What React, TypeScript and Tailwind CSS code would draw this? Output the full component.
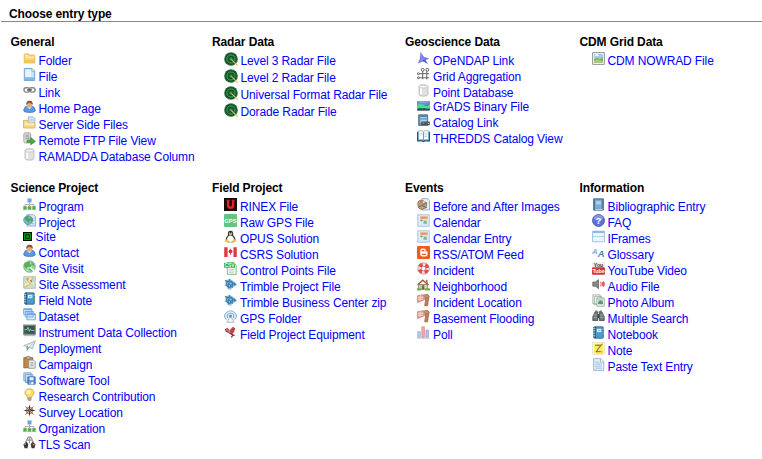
import React from "react";

type Item = { label: string; icon: React.ReactNode; kind?: "radar" | "site" | "short" };
type Section = { title: string; items: Item[] };

const I = {
  folder: (
    <>
      <path d="M1.5 13.5V3.2q0-1 1-1h4l1.3 1.6h5.7q1 0 1 1v8.7z" fill="#f7d57c" stroke="#dfb35c" />
      <path d="M3 6.5h10.5M3 4.5h3" stroke="#fff3bf" strokeWidth="1.4" />
      <path d="M2 10h12v3H2z" fill="#f2c45a" />
    </>
  ),
  file: (
    <>
      <path d="M1.6.6h9.6l3.2 3.2v11.6H1.6z" fill="#c9e2fa" stroke="#5f95ce" />
      <path d="M3 2h7v9H3z" fill="#e5f2ff" />
      <path d="M2.2 11.5h11.6V15H2.2z" fill="#84b5ea" />
      <path d="M11 .8v3.4h3.2" fill="#fff" stroke="#79a9dc" />
    </>
  ),
  link: (
    <g fill="none" stroke="#888" strokeWidth="1.8">
      <rect x="1.2" y="4.5" width="7" height="5.5" rx="2.5" />
      <rect x="7.8" y="4.5" width="7" height="5.5" rx="2.5" />
      <path d="M5 7.3h6" stroke="#555" />
    </g>
  ),
  person: (
    <>
      <path d="M1 13.5q0-5.5 4.5-5.5h5q4.5 0 4.5 5.5-1 1.8-7 1.8T1 13.5z" fill="#5c9ae0" stroke="#3e72b9" />
      <path d="M5 8.5l3 3 3-3" fill="#c8e2ff" />
      <circle cx="8" cy="5.5" r="3.6" fill="#e6ad7b" />
      <path d="M4 6Q3.6.8 8 .8T12 6l-1-1.5q-3-.3-4-1.5-.6 1.7-2 2z" fill="#85502c" />
    </>
  ),
  serverFiles: (
    <>
      <path d="M6.5 1h6l2 2v8h-8z" fill="#dcecff" stroke="#82acd8" />
      <path d="M8 4h5M8 6h5" stroke="#9cc4ec" />
      <path d="M.7 14.8V5.3H6l1.2 1.5v1.7h7.5v6.3z" fill="#f7d888" stroke="#d7a853" />
      <path d="M2 10h12" stroke="#fff1bf" strokeWidth="2" />
    </>
  ),
  remote: (
    <>
      <rect x="1" y="1" width="8.5" height="12.5" rx="1.8" fill="#dedede" stroke="#999" />
      <path d="M3 3.8h5M3 6h5M3 8.2h5" stroke="#858585" />
      <path d="M5 10h4.5V6.7l5.8 5-5.8 4v-3H5z" fill="#4aaa3d" stroke="#347c2d" strokeWidth=".8" />
    </>
  ),
  db: (
    <>
      <path d="M2.5 3q0-2 5.5-2t5.5 2v10q0 2-5.5 2t-5.5-2z" fill="#e1e1e1" stroke="#b4b4b4" />
      <path d="M5 5v8" stroke="#fff" strokeWidth="2" />
      <ellipse cx="8" cy="3.2" rx="5.2" ry="1.9" fill="#f5f5f5" stroke="#bdbdbd" />
    </>
  ),
  org: (
    <>
      <path d="M8 5v3M2.5 10.5V8h11v2.5M8 8v3" fill="none" stroke="#b29b91" />
      <rect x="5.8" y=".8" width="4.5" height="4.5" fill="#6ba2e6" stroke="#a5c7f3" strokeWidth=".7" />
      <g fill="#54a957" stroke="#8cc787" strokeWidth=".7">
        <rect x=".5" y="10" width="4" height="4.5" />
        <rect x="6" y="10" width="4" height="4.5" />
        <rect x="11.5" y="10" width="4" height="4.5" />
      </g>
    </>
  ),
  project: (
    <>
      <path d="M5 .8h8l2.3 2.3v11.8H5z" fill="#dbeaff" stroke="#78a4d3" />
      <path d="M12 5h2M12 8h2M11 12h3" stroke="#83b4e4" />
      <circle cx="6.4" cy="7.6" r="5.5" fill="#70b8c8" stroke="#75919a" />
      <path d="M2 5q3-4 5-2l-1 2 3 1-2 5-3-3zM9 4l3 2-1 4-2-2z" fill="#53a45b" />
    </>
  ),
  site: (
    <>
      <path fill="#001000" d="M0 0h16v16H0z" />
      <path d="M3 3h10v10H3z" fill="none" stroke="#00b916" strokeWidth="1.9" />
      <path d="M6.5 6.5h3v3h-3z" fill="#002a03" stroke="#00c918" strokeWidth="1.6" />
    </>
  ),
  globe: (
    <>
      <circle cx="8" cy="8" r="7.1" fill="#a6d8ad" stroke="#6aaa75" />
      <path d="M2 4q4-5 7-2l-1 3 3 1-2 3-3-1-2 3-3-4zM10 2q4 2 4 6l-3-2zM7 11l5-2 1 2-3 3z" fill="#57ad5a" />
      <path d="M9 9l5 5" stroke="#f3fff5" strokeWidth="2" />
      <path d="M3 3q2-2 5-2" fill="none" stroke="#e1ffe2" />
    </>
  ),
  assess: (
    <>
      <path d="M1 1h14v14H1z" fill="#e9edc7" stroke="#98a4a6" />
      <path d="M2 3l4 4-4 3zM10 2h4v6l-4-2z" fill="#badee6" />
      <path d="M3 3l4 4 5 7M12 2l-3 8-7 4" fill="none" stroke="#e2bd51" strokeWidth="1.5" />
      <path d="M5 3l2 1M9 5l2 2" stroke="#c95443" strokeWidth="1.4" />
      <path d="M7 10l6-1v5H8z" fill="#c7d9e7" />
    </>
  ),
  notebook: (
    <>
      <rect x="2" y="1" width="12" height="14" rx="1.2" fill="#4a9bd0" stroke="#2d5f80" />
      <path d="M4 1v14" stroke="#214b66" strokeWidth="1.4" />
      <path d="M6 3.5h5.5v4H6z" fill="#dceeff" />
      <path d="M7 5.5h3.5" stroke="#83afcf" />
      <path d="M1 3h3M1 6h3M1 9h3M1 12h3" stroke="#d2d2d2" />
      <path d="M14 3v2" stroke="#e5ae52" strokeWidth="1.3" />
      <path d="M14 8v2" stroke="#73bc59" strokeWidth="1.3" />
    </>
  ),
  dataset: (
    <>
      <g fill="#d9ebff" stroke="#6ca0db">
        <path d="M.8 1h10v7H.8zM2.7 4h10v7h-10zM4.8 7h10.5v7.5H4.8z" />
      </g>
      <path d="M1 1.7h10M3 4.7h10M5 7.9h10" stroke="#6ca6e5" strokeWidth="1.8" />
    </>
  ),
  monitor: (
    <>
      <path d="M.8 1.3h14.4v11.5H.8z" fill="#315852" stroke="#8b8e89" strokeWidth="1.4" />
      <path d="M2 7h3l1-3 2 5 1-3 1.5 2H14" fill="none" stroke="#a3dfb5" />
      <path d="M1 14.3h14" stroke="#b8b8b8" strokeWidth="1.5" />
    </>
  ),
  plane: (
    <>
      <path d="M.7 7L15.3 1l-3.7 10-4-2L5 13l-.5-5z" fill="#d9e6e4" stroke="#8eaaaa" strokeWidth=".8" />
      <path d="M4.5 8.4L15 1.5 7.5 9 5 13z" fill="#7d9f9e" />
      <path d="M6 7l8-5-7 7z" fill="#f9ffff" />
    </>
  ),
  clipboard: (
    <>
      <path d="M1 2h11v12.5H1z" fill="#c38949" stroke="#8a5f36" />
      <rect x="4" y=".7" width="5" height="3" rx="1" fill="#d7c3a0" stroke="#846d52" />
      <path d="M7 5h6l2 2v8H7z" fill="#eee" stroke="#8d8d8d" />
      <path d="M9 8h4M9 10h4M9 12h4" stroke="#999" />
    </>
  ),
  software: (
    <>
      <path d="M1 1h9v10H1zM3 3h9v10H3z" fill="#c9def7" stroke="#6f9bcc" />
      <path d="M6 6h9v9H6z" fill="#4f84c9" stroke="#3668a9" />
      <path d="M8 6.5h5V10H8zM8 12h5v3H8z" fill="#e6f2ff" />
      <path d="M9 12h1v2H9z" fill="#315e98" />
    </>
  ),
  bulb: (
    <>
      <path d="M5 10C-.2 6.5 3 1 8 1s8 5.5 3 9l-.5 2h-5z" fill="#ffda65" stroke="#d8a546" />
      <ellipse cx="7" cy="5" rx="3" ry="2.8" fill="#fff4ab" />
      <path d="M5.5 11.5h5v3h-5z" fill="#a7a39c" />
      <path d="M6 15h4" stroke="#6c6c6c" />
    </>
  ),
  compass: (
    <>
      <circle cx="8" cy="8" r="4.2" fill="none" stroke="#99765c" />
      <path d="M8 0l1 6.3L16 8 9.2 9.1 8 16 6.9 9.2 0 8l6.8-1.1z" fill="#46362e" />
      <path d="M3 3l4 4M13 3L9 7M3 13l4-4M13 13L9 9" stroke="#6d5446" />
      <circle cx="8" cy="8" r="1.4" fill="#ad6842" />
    </>
  ),
  scan: (
    <>
      <path d="M3 8l3-6q2-2 4 0l3 6M5 5h6M8 2v7" fill="none" stroke="#999" strokeWidth="1.5" />
      <path d="M.5 10l4-3 2 3-1 5H2zM15.5 10l-4-3-2 3 1 5H14z" fill="#383536" />
      <path d="M.5 10l3-2v3zM15 11l-3-2v3z" fill="#c78665" />
    </>
  ),
  radar: (
    <>
      <circle cx="8" cy="8" r="7.8" fill="#23733d" />
      <g fill="none" stroke="#174428">
        <circle cx="8" cy="8" r="6" strokeWidth="1.3" />
        <circle cx="8" cy="8" r="3" />
        <path d="M2.5 2.5l11 11M13.5 2.5l-11 11" strokeWidth=".6" />
      </g>
      <circle cx="8" cy="8" r="4.6" fill="none" stroke="#35a04e" strokeWidth=".9" />
      <path d="M7.5 7.5l8 8" stroke="#d8bf4b" strokeWidth="1.3" />
      <circle cx="8" cy="8" r="1" fill="#45b24a" />
    </>
  ),
  rinex: (
    <>
      <path d="M0 0h16v16H0z" fill="#120c0c" />
      <path d="M5 3v5.8q0 3 3.1 3t3.1-3V3" fill="none" stroke="#ed1d26" strokeWidth="3" />
      <path d="M3 2.8h4.2M9.7 2.8h3.6" stroke="#ed1d26" strokeWidth="1.4" />
    </>
  ),
  gps: (
    <>
      <rect width="16" height="16" rx="1.2" fill="#65c481" />
      <text x="8" y="10.8" textAnchor="middle" fontSize="7.2" letterSpacing="0" fontWeight="bold" fill="#eafff0" fontFamily="Liberation Sans">GPS</text>
    </>
  ),
  penguin: (
    <>
      <path d="M5 6Q4 1 8 1t3.2 5q3 3 3 7l-2.5 2h-7L2 13q0-4 3-7z" fill="#303030" />
      <path d="M6 7q-3 3-2.5 6l4.5 2 4.5-2Q13 10 10 7z" fill="#fff" />
      <path d="M6 5q2-2 4 0L8 7.3zM1 12l3-1 2 3-1 1.5-4-1zM15 12l-3-1-2 3 1 1.5 4-1z" fill="#eec64b" />
      <circle cx="6.7" cy="3.8" r=".7" fill="#fff" /><circle cx="9.5" cy="3.8" r=".7" fill="#fff" />
    </>
  ),
  canada: (
    <>
      <path d="M.3 1.5h15.4v12H.3z" fill="#f6f3f3" />
      <path d="M.3 1.5h4.1v12H.3zM11.7 1.5h4v12h-4z" fill="#e03842" />
      <path d="M8 3l.8 2 1-.5v2l1.3.2-2.2 2H8.4v2h-.8v-2H6.8L5 6.8l1.2-.3v-2l1 .5z" fill="#d92d3b" />
    </>
  ),
  csv: (
    <>
      <path d="M4 .8h8l3 3v11.4H4z" fill="#f8fff6" stroke="#69a867" />
      <path d="M6 9h7M6 11h7M6 13h6" stroke="#b3cbb2" />
      <path d="M0 1h13.5v6H0z" fill="#36a83a" />
      <text x="6.8" y="6.3" textAnchor="middle" fontSize="6" letterSpacing="0" fontWeight="bold" fill="#e6ffe4" fontFamily="Liberation Sans">CSV</text>
    </>
  ),
  trimble: (
    <>
      <path d="M1 3l6-2 5 3 4 4-4 3-5 4-5-6z" fill="#9dc5e0" />
      <path d="M1.5 3l10 3-6 7M7 1L5 13M1 9l11-2M2 3l9 9" fill="none" stroke="#2b6da4" strokeWidth=".9" />
      <circle cx="7" cy="7.5" r="3.8" fill="none" stroke="#327bb0" strokeWidth="1.3" />
      <path d="M12 5l3.5 3L12 10" fill="#467fae" />
    </>
  ),
  antenna: (
    <>
      <path d="M3 12q-4-4-1-8 6-6 12 0 3 4-1 8" fill="#e2effb" stroke="#8ab3dd" strokeWidth="1.3" />
      <path d="M4.5 10q-2-6 3.5-6t3.5 6" fill="none" stroke="#83aed9" strokeWidth="1.4" />
      <path d="M8 8L3.5 15h9z" fill="#f6f8fa" stroke="#9faab3" />
      <circle cx="8" cy="7.5" r="1.8" fill="#7c858b" />
    </>
  ),
  equipment: (
    <>
      <path d="M1 4l3-2 3 3 4-4 3 2-2 5-3 3-3-2-4-2z" fill="#b8464b" />
      <path d="M3 4l5 4M9 3L6 7" stroke="#e3a0a0" />
      <path d="M8 9l3 2-2 3M11 11l2 1" fill="none" stroke="#8e3236" strokeWidth="1.6" />
    </>
  ),
  opendap: (
    <>
      <path d="M4.5 0l4 6 6.5 2-4.5 2 3.5 5-6-3.5-7 2.5 2.5-5.8z" fill="#6873e1" />
      <path d="M5 1l1.8 6 3.2 1.6-2 1.6-6 3L4.8 9z" fill="#8591f0" />
      <path d="M8 9l5 5-6-3z" fill="#4653bd" />
    </>
  ),
  grid: (
    <g fill="#fff" stroke="#555" strokeWidth="1.1">
      <path d="M2 7h13M2 12h13M7 3v11M12 3v11" />
      <circle cx="7" cy="2.2" r="1.8" /><circle cx="12.7" cy="2.2" r="1.8" />
      <circle cx="1.7" cy="7" r="1.2" /><circle cx="1.7" cy="12" r="1.2" />
    </g>
  ),
  grads: (
    <>
      <path d="M0 3h16v11H0z" fill="#315e95" />
      <path d="M0 3h16v4L0 9z" fill="#6889dc" />
      <path d="M0 8q4-4 8-1t8-1v6H0z" fill="#4bde7f" />
      <path d="M1 12l3-1 2 1 3-1 2 1h4v2H1z" fill="#294863" />
      <path d="M2 4h11" stroke="#91bef7" />
    </>
  ),
  book: (
    <>
      <path d="M2 1h12v14H2z" fill="#5283ae" stroke="#3a6188" />
      <path d="M3 2h9v11H3z" fill="#7aabcf" />
      <path d="M5 4h6v4H5z" fill="#b4d0e4" />
      <path d="M4 14h9" stroke="#d9e5ef" strokeWidth="1.2" />
      <path d="M3 2v12" stroke="#406b91" />
    </>
  ),
  catalog: (
    <>
      <path d="M2 1h11v13H2z" fill="#5f94c0" stroke="#3e678d" />
      <path d="M4 3h8v8H4z" fill="#b5d2e7" />
      <path d="M4 3h8M4 6h8" stroke="#396b99" />
      <path d="M6 10h4v3H6zM11 10h4v3h-4z" fill="none" stroke="#4d4d4d" strokeWidth="1.5" />
    </>
  ),
  openBook: (
    <>
      <path d="M0 2h6l2 1 2-1h6v12h-6l-2 1-2-1H0z" fill="#245985" />
      <path d="M2 1h5l1 2 1-2h5v11H9l-1 1-1-1H2z" fill="#fff" stroke="#86b5d1" />
      <path d="M3.5 4H7M3.5 6H7M9 4h3.5M9 6h3.5M9 8h3.5" stroke="#b5cedd" />
      <path d="M8 3v10" stroke="#5283a7" />
    </>
  ),
  images: (
    <>
      <path d="M6 .8h7l2.3 2.4v11.5H6z" fill="#e3efff" stroke="#7ca2cd" />
      <path d="M1 7q0-5 6-4l5 3-1 6-5 2q-5 0-5-7z" fill="#c39b77" stroke="#8d6c50" />
      <circle cx="5" cy="5" r="1.5" fill="#e77250" /><circle cx="8.5" cy="5" r="1.2" fill="#dbe6bd" />
      <path d="M2 11l10-5M7 10l5 2" stroke="#60748a" strokeWidth="1.3" />
    </>
  ),
  calendar: (
    <>
      <path d="M1 1h14v14H1z" fill="#e6f2fc" stroke="#8fb5da" />
      <path d="M4 3h9v3H4z" fill="#f7924e" />
      <path d="M3 6.5h10V13H3z" fill="#cce2f2" />
      <path d="M4 7v5M7 7v5M10 7v5M3 9h10" stroke="#fff" />
      <path d="M8 8h4v4H8z" fill="#8bb478" />
      <path d="M4 7h3v2H4z" fill="#6ba1a4" />
    </>
  ),
  feed: (
    <>
      <rect width="16" height="16" rx="1.2" fill="#f45a1b" />
      <path d="M4 5.4Q4 3 6.4 3h2q2.6 0 2.6 2.7 0 1 1.1 1 .9 0 .9 1.2v2.3q0 2.8-2.8 2.8H6.8Q4 13 4 10.3z" fill="#fff" />
      <path d="M6.5 5.8h2M6.5 10.2h4" stroke="#f45a1b" strokeWidth="1.5" strokeLinecap="round" />
    </>
  ),
  ring: (
    <>
      <circle cx="8" cy="8" r="5" fill="none" stroke="#f4e9e7" strokeWidth="4.5" />
      <circle cx="8" cy="8" r="5" fill="none" stroke="#e34945" strokeWidth="4.4" strokeDasharray="4.4 3.454" strokeDashoffset="-1.8" />
      <circle cx="8" cy="8" r="7" fill="none" stroke="#be7771" strokeWidth=".8" />
      <circle cx="8" cy="8" r="2.7" fill="#fff" stroke="#b96662" />
    </>
  ),
  house: (
    <>
      <path d="M2 8h11v6H2z" fill="#ead5ad" stroke="#8c7459" />
      <path d="M0 8l7-6.5L15 8l-1.5 1L7 4 1.3 9z" fill="#965f40" />
      <path d="M11 2h2v5l-2-2z" fill="#a47051" />
      <path d="M6 9h3v5H6z" fill="#7b5e48" />
      <path d="M0 14h5M10 14h6" stroke="#69b64d" strokeWidth="2.5" />
      <path d="M3 9h2v2H3z" fill="#8ebed2" />
    </>
  ),
  thumb: (
    <>
      <path d="M1 2l7-1 1 6-7 3H0V5z" fill="#f4a49e" stroke="#dc6767" />
      <path d="M1 4h7M1 6.5h7M4 1v8" stroke="#f9dedb" strokeWidth=".8" />
      <path d="M9 1l4-.5 2 2-1 5-1 7H9.5l1-7z" fill="#bd8157" stroke="#9b6746" />
      <path d="M9 2l4 1" stroke="#e4b188" />
    </>
  ),
  poll: (
    <>
      <path d="M1 7h3v7H1z" fill="#b7d4f2" stroke="#8cafd5" />
      <path d="M6 1h3v13H6z" fill="#f4b0ae" stroke="#d98084" />
      <path d="M11 5h3v9h-3z" fill="#c2b7e7" stroke="#a99bd0" />
      <path d="M0 15h16" stroke="#bbb" />
    </>
  ),
  image: (
    <>
      <path d="M.8.8h14.4v14.4H.8z" fill="#fff" stroke="#8c8c8c" strokeWidth="1.2" />
      <path d="M2.5 2.5h11v11h-11z" fill="#9ecaf0" />
      <path d="M2.5 9l4-2 3 2 4-3v7.5h-11z" fill="#75b457" />
      <path d="M2.5 11l4-2 7 2v2.5h-11z" fill="#a7cd72" />
      <path d="M4 5q2-3 4 0" fill="none" stroke="#fff" strokeWidth="1.5" />
    </>
  ),
  faq: (
    <>
      <circle cx="8" cy="8" r="7.4" fill="#5c72d6" stroke="#4657ae" />
      <ellipse cx="8" cy="4.5" rx="5.5" ry="3.2" fill="#8194ea" />
      <text x="8" y="12.4" textAnchor="middle" fontSize="12" letterSpacing="0" fontWeight="bold" fill="#fff" fontFamily="Liberation Sans">?</text>
    </>
  ),
  iframe: (
    <>
      <path d="M.7 1.5h14.6v13H.7z" fill="#edf5ff" stroke="#92b7dc" />
      <path d="M1 2.5h14" stroke="#80afdf" strokeWidth="2" />
      <path d="M1 8h14" stroke="#91bae2" strokeDasharray="2 .6" />
    </>
  ),
  glossary: (
    <g fontFamily="Liberation Sans" fontWeight="bold" fontStyle="italic" letterSpacing="0">
      <text x="0" y="10" fontSize="9.5" fill="#7db0e0">A</text>
      <text x="7.2" y="14" fontSize="11.5" fill="#4d82b5">A</text>
    </g>
  ),
  youtube: (
    <>
      <path d="M0 0h16v7H0z" fill="#eee" />
      <rect y="6.5" width="16" height="9.3" rx="1.5" fill="#d33635" />
      <g fontFamily="Liberation Sans" fontWeight="bold" textAnchor="middle" letterSpacing="0">
        <text x="8" y="5.8" fontSize="6.3" fill="#303030">You</text>
        <text x="8" y="13.5" fontSize="6.5" fill="#fff">Tube</text>
      </g>
    </>
  ),
  audio: (
    <>
      <path d="M1 5h3l4-3v11l-4-3H1z" fill="#888" stroke="#646464" />
      <path d="M10.5 4.5q1.7 3 0 6" fill="none" stroke="#df7c80" strokeWidth="1.5" />
      <ellipse cx="14" cy="7.5" rx="1.8" ry="3.6" fill="#e7545d" />
    </>
  ),
  photos: (
    <>
      <path d="M1 1h9v11H1zM3 3h9v10H3z" fill="#f2f2ef" stroke="#9daca6" />
      <path d="M6 5h9v10H6z" fill="#fff" stroke="#829c8a" />
      <path d="M7.5 6.5h6v6h-6z" fill="#9bc7dd" />
      <path d="M7.5 10l3-2 3 2v2.5h-6z" fill="#589d50" />
    </>
  ),
  search: (
    <>
      <path d="M3 4l1-2h3v11H1V8zM9 2h3l1 2 2 4v5H9z" fill="#6f7476" stroke="#464b4d" />
      <path d="M2 6h4M10 6h4M2 9h4M10 9h4" stroke="#a2acad" strokeWidth="1.2" />
      <path d="M7 5h2v5H7z" fill="#444" />
      <path d="M4 1h2M10 1h2" stroke="#888" strokeWidth="1.5" />
    </>
  ),
  note: (
    <>
      <path d="M.7.7h14.6v14.6H.7z" fill="#fff" stroke="#e5dfc4" />
      <path d="M2 2h12v12H2z" fill="#fbef62" />
      <path d="M4 4h7L5 12h7" fill="none" stroke="#665b24" strokeWidth="1.2" />
      <path d="M13 2L7 9" stroke="#bb813b" strokeWidth="1.5" />
      <path d="M2 14l12-3v3z" fill="#f0d938" />
    </>
  ),
  paste: (
    <>
      <path d="M2 .8h9l3.5 3.5v11H2z" fill="#e3eefa" stroke="#8dacd1" />
      <path d="M10.5 1v4h4" fill="#fff" stroke="#8dacd1" />
      <path d="M4 5h5M4 7.5h8M4 10h8M4 12.5h8" stroke="#99b6d6" />
    </>
  ),
};

const columns: [Section, Section][] = [
  [
    {
      title: "General",
      items: [
        { label: "Folder", icon: I.folder },
        { label: "File", icon: I.file },
        { label: "Link", icon: I.link },
        { label: "Home Page", icon: I.person },
        { label: "Server Side Files", icon: I.serverFiles },
        { label: "Remote FTP File View", icon: I.remote },
        { label: "RAMADDA Database Column", icon: I.db },
      ],
    },
    {
      title: "Science Project",
      items: [
        { label: "Program", icon: I.org },
        { label: "Project", icon: I.project },
        { label: "Site", icon: I.site, kind: "site" },
        { label: "Contact", icon: I.person },
        { label: "Site Visit", icon: I.globe },
        { label: "Site Assessment", icon: I.assess },
        { label: "Field Note", icon: I.notebook },
        { label: "Dataset", icon: I.dataset },
        { label: "Instrument Data Collection", icon: I.monitor },
        { label: "Deployment", icon: I.plane },
        { label: "Campaign", icon: I.clipboard },
        { label: "Software Tool", icon: I.software },
        { label: "Research Contribution", icon: I.bulb },
        { label: "Survey Location", icon: I.compass },
        { label: "Organization", icon: I.org },
        { label: "TLS Scan", icon: I.scan },
      ],
    },
  ],
  [
    {
      title: "Radar Data",
      items: [
        { label: "Level 3 Radar File", icon: I.radar, kind: "radar" },
        { label: "Level 2 Radar File", icon: I.radar, kind: "radar" },
        { label: "Universal Format Radar File", icon: I.radar, kind: "radar" },
        { label: "Dorade Radar File", icon: I.radar, kind: "radar" },
      ],
    },
    {
      title: "Field Project",
      items: [
        { label: "RINEX File", icon: I.rinex },
        { label: "Raw GPS File", icon: I.gps },
        { label: "OPUS Solution", icon: I.penguin },
        { label: "CSRS Solution", icon: I.canada },
        { label: "Control Points File", icon: I.csv },
        { label: "Trimble Project File", icon: I.trimble },
        { label: "Trimble Business Center zip", icon: I.trimble },
        { label: "GPS Folder", icon: I.antenna },
        { label: "Field Project Equipment", icon: I.equipment },
      ],
    },
  ],
  [
    {
      title: "Geoscience Data",
      items: [
        { label: "OPeNDAP Link", icon: I.opendap },
        { label: "Grid Aggregation", icon: I.grid },
        { label: "Point Database", icon: I.db },
        { label: "GrADS Binary File", icon: I.grads, kind: "short" },
        { label: "Catalog Link", icon: I.catalog },
        { label: "THREDDS Catalog View", icon: I.openBook },
      ],
    },
    {
      title: "Events",
      items: [
        { label: "Before and After Images", icon: I.images },
        { label: "Calendar", icon: I.calendar },
        { label: "Calendar Entry", icon: I.calendar },
        { label: "RSS/ATOM Feed", icon: I.feed },
        { label: "Incident", icon: I.ring },
        { label: "Neighborhood", icon: I.house },
        { label: "Incident Location", icon: I.thumb },
        { label: "Basement Flooding", icon: I.thumb },
        { label: "Poll", icon: I.poll },
      ],
    },
  ],
  [
    { title: "CDM Grid Data", items: [{ label: "CDM NOWRAD File", icon: I.image }] },
    {
      title: "Information",
      items: [
        { label: "Bibliographic Entry", icon: I.book },
        { label: "FAQ", icon: I.faq },
        { label: "IFrames", icon: I.iframe },
        { label: "Glossary", icon: I.glossary },
        { label: "YouTube Video", icon: I.youtube },
        { label: "Audio File", icon: I.audio },
        { label: "Photo Album", icon: I.photos },
        { label: "Multiple Search", icon: I.search },
        { label: "Notebook", icon: I.notebook },
        { label: "Note", icon: I.note },
        { label: "Paste Text Entry", icon: I.paste },
      ],
    },
  ],
];

const rowClass = {
  radar: "h-[17px] gap-[2.5px]",
  site: "-mt-0.5 h-4 gap-1",
  short: "-mt-0.5 h-4 gap-[3px]",
  normal: "h-4 gap-[3px]",
};
const iconClass = {
  radar: "-mt-px size-3.5",
  site: "mt-[3px] size-[9px]",
  short: "size-[13px]",
  normal: "-mt-px size-[13px]",
};

function EntryList({ section }: { section: Section }) {
  return (
    <section>
      <h2 className="h-[19px] leading-4 font-bold text-black">{section.title}</h2>
      <ul className="pl-3">
        {section.items.map((item) => {
          const kind = item.kind ?? "normal";
          return (
            <li key={item.label} className={`flex items-start ${rowClass[kind]}`}>
              <svg viewBox="0 0 16 16" className={`shrink-0 ${iconClass[kind]}`}>{item.icon}</svg>
              <a className="leading-4 whitespace-nowrap text-[#0000ff]">{item.label}</a>
            </li>
          );
        })}
      </ul>
    </section>
  );
}

export default function App() {
  return (
    <main className="h-[459px] w-[762px] overflow-hidden bg-white font-['Liberation_Sans',Arial,sans-serif] text-[12px] tracking-[-0.12px]">
      <h1 className="ml-px h-[22px] border-b border-[#888] pt-1.5 pl-2 leading-4 font-bold text-black">Choose entry type</h1>
      <div className="grid grid-cols-[201.5px_193px_174.5px_1fr] pt-3 pl-[10.5px]">
        {columns.map(([top, bottom]) => (
          <div key={top.title} className="grid grid-rows-[146px_auto]">
            <EntryList section={top} />
            <EntryList section={bottom} />
          </div>
        ))}
      </div>
    </main>
  );
}
